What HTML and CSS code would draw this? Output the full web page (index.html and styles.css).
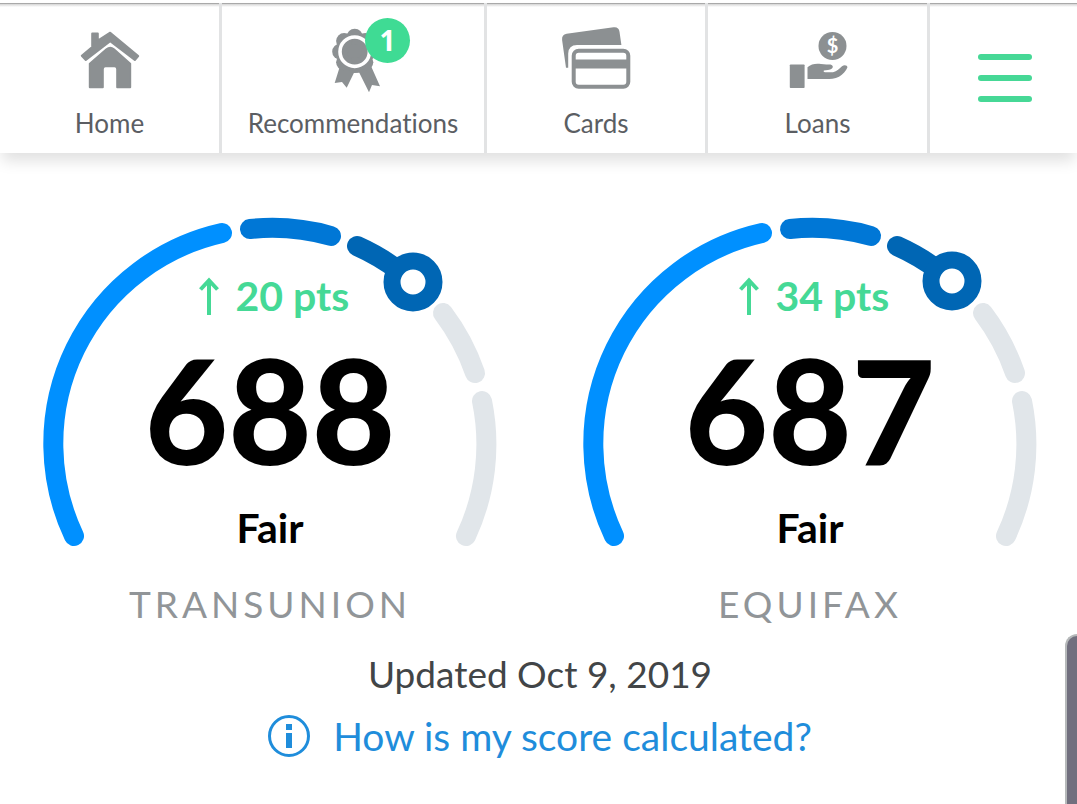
FILE: index.html
```html
<!DOCTYPE html>
<html lang="en">
<head>
  <meta charset="UTF-8">
  <meta name="viewport" content="width=device-width, initial-scale=1">
  <title>Credit Scores</title>
  <link rel="stylesheet" href="styles.css">
</head>
<body>
  <nav class="nav">
    <a class="nav-item" href="#home">
      <svg class="nav-icon" viewBox="0 0 70 68" aria-hidden="true">
        <g stroke="currentColor" stroke-width="2" stroke-linejoin="round">
          <path d="M17.2 7.5H22.8V14.5L35.2 6.7L63.2 30L59.8 34L35.2 15.2L10.8 34L6.8 29.7L17.2 20.9Z"/>
          <path d="M14.8 37.8L31.5 23.2Q35.2 20.2 38.9 23.2L55.2 37.8V61.3H42.2V43Q42.2 40.3 39.5 40.3H30.5Q27.8 40.3 27.8 43V61.3H14.8Z"/>
        </g>
      </svg>
      <span>Home</span>
    </a>
    <a class="nav-item" href="#recommendations">
      <span class="icon-wrap">
        <svg class="nav-icon" viewBox="0 0 70 68" aria-hidden="true">
          <path d="M22 40L16.7 57L24 56L28.7 61.7L36 46.7H41.3L51 66.3L54 59L62 60.3L53 40Z"/>
          <circle cx="36.7" cy="25.7" r="18"/>
          <circle cx="36.7" cy="10.7" r="8"/>
          <circle cx="47.3" cy="15.1" r="8"/>
          <circle cx="51.2" cy="25.7" r="8"/>
          <circle cx="47.3" cy="36.3" r="8"/>
          <circle cx="36.7" cy="39" r="8"/>
          <circle cx="26.1" cy="36.3" r="8"/>
          <circle cx="22.2" cy="25.7" r="8"/>
          <circle cx="26.1" cy="15.1" r="8"/>
          <circle cx="36.7" cy="25.7" r="14.7" fill="none" stroke="#fff" stroke-width="3.6"/>
        </svg>
        <span class="badge">1</span>
      </span>
      <span>Recommendations</span>
    </a>
    <a class="nav-item" href="#cards">
      <svg class="nav-icon" viewBox="0 0 70 68" aria-hidden="true">
        <path d="M5 41.7L1.1 14Q.6 8.6 5.6 7.8L52.5 1.3Q57.8 .6 58.5 5.8L60.4 19H16Q7.5 19 7.2 27.5V41.7Z"/>
        <rect x="12.7" y="24.7" width="54.6" height="36" rx="5" fill="none" stroke="currentColor" stroke-width="4"/>
        <path d="M12 33.4H68V42.6H12Z"/>
      </svg>
      <span>Cards</span>
    </a>
    <a class="nav-item" href="#loans">
      <svg class="nav-icon" viewBox="0 0 70 68" aria-hidden="true">
        <rect x="6.8" y="38.5" width="14.8" height="23.6" rx=".8"/>
        <path d="M24.5 41.3C28 37.8 33 37.2 38 37.9C42 38.5 45 38.2 47.5 38.5C50 39 50.5 41.2 49 42.4C47 44 43 43.8 40.8 44.5Q40 46 42 46.2H50C54 45 56.5 42.5 59 40.2C61.5 38.5 64.5 39.3 64.4 41.6C63 45 60 48.6 56 50.8C52 53 47 53 43 53H24.5Z"/>
        <circle cx="49.5" cy="20" r="14"/>
        <text class="coin-sign" x="49.5" y="27" text-anchor="middle">$</text>
      </svg>
      <span>Loans</span>
    </a>
    <button class="menu-btn" type="button" aria-label="Menu">
      <span class="menu-line"></span>
      <span class="menu-line"></span>
      <span class="menu-line"></span>
    </button>
  </nav>

  <main class="content">
    <div class="scores">
      <section class="score">
        <div class="gauge">
          <svg class="dial" viewBox="0 0 452 330" aria-hidden="true">
            <path class="seg-1" d="M30 318A216 216 0 0 1 178 15"/>
            <path class="seg-2" d="M206 11A216 216 0 0 1 287 18"/>
            <path class="seg-3" d="M313 28A216 216 0 0 1 354 52"/>
            <path class="seg-off" d="M399 95A216 216 0 0 1 431 155"/>
            <path class="seg-off" d="M438 183A216 216 0 0 1 422 318"/>
            <circle class="knob" cx="369" cy="64" r="21"/>
          </svg>
          <div class="reading">
            <p class="change">
              <svg class="arrow" viewBox="0 0 20 38" aria-hidden="true"><path d="M10 38V4M1.5 12.5L10 3.5L18.5 12.5"/></svg>
              20 pts
            </p>
            <p class="number">688</p>
            <p class="rating">Fair</p>
          </div>
        </div>
        <h2 class="bureau">TRANSUNION</h2>
      </section>

      <section class="score">
        <div class="gauge">
          <svg class="dial" viewBox="0 0 452 330" aria-hidden="true">
            <path class="seg-1" d="M30 318A216 216 0 0 1 178 15"/>
            <path class="seg-2" d="M206 11A216 216 0 0 1 287 18"/>
            <path class="seg-3" d="M313 28A216 216 0 0 1 354 52"/>
            <path class="seg-off" d="M399 95A216 216 0 0 1 431 155"/>
            <path class="seg-off" d="M438 183A216 216 0 0 1 422 318"/>
            <circle class="knob" cx="368" cy="63" r="21"/>
          </svg>
          <div class="reading">
            <p class="change">
              <svg class="arrow" viewBox="0 0 20 38" aria-hidden="true"><path d="M10 38V4M1.5 12.5L10 3.5L18.5 12.5"/></svg>
              34 pts
            </p>
            <p class="number">687</p>
            <p class="rating">Fair</p>
          </div>
        </div>
        <h2 class="bureau">EQUIFAX</h2>
      </section>
    </div>

    <p class="updated">Updated Oct 9, 2019</p>
    <a class="help" href="#how">
      <svg class="info" viewBox="0 0 42 42" aria-hidden="true">
        <circle cx="21" cy="21" r="19.5" fill="none" stroke="currentColor" stroke-width="3"/>
        <path d="M18 9H24V15H18ZM18 18H24V33H18Z"/>
      </svg>
      How is my score calculated?
    </a>
  </main>

  <div class="side-handle"></div>
</body>
</html>
```
FILE: styles.css
```css
* {
  box-sizing: border-box;
}
body {
  margin: 0;
  padding-top: 3px;
  background: #fff;
  color: #000;
  font-family: Lato, "Liberation Sans", sans-serif;
  font-variant-ligatures: none;
}
p, h2 {
  margin: 0;
}
a {
  text-decoration: none;
}

/* top navigation */
.nav {
  display: grid;
  grid-template-columns: 222fr 265fr 221fr 222fr 147fr;
  height: 150px;
  background: linear-gradient(#a9a9a9 1px, #d4d4d4 1px, #fff 4px);
  box-shadow: 0 10px 14px -2px rgba(0,0,0,0.12);
}
.nav-item {
  display: flex;
  flex-direction: column;
  align-items: center;
  gap: 13px;
  padding-top: 23px;
  border-right: 3px solid #e2e3e4;
  color: #5b5e63;
  font-size: 26px;
  line-height: 32px;
}
.nav-icon {
  display: block;
  width: 70px;
  height: 68px;
  color: #8c9092;
  fill: currentColor;
}
.icon-wrap {
  position: relative;
}
.badge {
  position: absolute;
  top: -8px;
  left: 47px;
  width: 45px;
  height: 45px;
  border-radius: 50%;
  background: #3fdb94;
  color: #fff;
  font-family: "Open Sans", sans-serif;
  font-size: 28px;
  font-weight: 700;
  line-height: 44px;
  text-align: center;
}
.coin-sign {
  fill: #fff;
  font-size: 20px;
  font-weight: 700;
}
.menu-btn {
  display: flex;
  flex-direction: column;
  align-items: center;
  justify-content: center;
  gap: 15px;
  padding: 0 0 0 2px;
  border: none;
  background: none;
  cursor: pointer;
}
.menu-line {
  width: 54px;
  height: 6px;
  border-radius: 3px;
  background: #46d896;
}

/* score dials */
.content {
  padding: 65px 0 0 3px;
}
.scores {
  display: grid;
  grid-template-columns: 1fr 1fr;
  column-gap: 6px;
}
.score {
  display: flex;
  flex-direction: column;
  align-items: center;
}
.gauge {
  display: grid;
  justify-items: center;
}
.dial, .reading {
  grid-area: 1 / 1;
}
.dial {
  width: 452px;
  height: 330px;
  fill: none;
  stroke-width: 20px;
  stroke-linecap: round;
  overflow: visible;
}
.seg-1 { stroke: #0090ff; }
.seg-2 { stroke: #0077d6; }
.seg-3 { stroke: #0066b4; }
.seg-off { stroke: #e1e6ea; }
.knob {
  fill: #fff;
  stroke: #0066b4;
  stroke-width: 17px;
}
.reading {
  padding-top: 54px;
  text-align: center;
}
.change {
  display: flex;
  align-items: center;
  justify-content: center;
  gap: 17px;
  padding-left: 8px;
  color: #45d996;
  font-size: 41px;
  font-weight: 700;
  line-height: 48px;
}
.arrow {
  width: 20px;
  height: 38px;
  fill: none;
  stroke: currentColor;
  stroke-width: 4px;
}
.number {
  margin-top: 17px;
  font-size: 144px;
  font-weight: 900;
  line-height: 146px;
}
.rating {
  margin-top: 21px;
  font-size: 41px;
  font-weight: 700;
  line-height: 48px;
}
.bureau {
  margin-top: 30px;
  color: #919598;
  font-size: 37px;
  font-weight: 400;
  letter-spacing: 4px;
  line-height: 44px;
}

.updated {
  margin-top: 26px;
  color: #424547;
  font-size: 37px;
  line-height: 44px;
  text-align: center;
}
.help {
  display: flex;
  align-items: center;
  justify-content: center;
  gap: 23px;
  margin-top: 18px;
  color: #1f8ddb;
  font-size: 39px;
  line-height: 44px;
}
.info {
  width: 42px;
  height: 42px;
  fill: currentColor;
}

/* edge panel handle over the page */
.side-handle {
  position: fixed;
  right: 0;
  bottom: 0;
  width: 12px;
  height: 170px;
  border: 2px solid #b6b9ba;
  border-width: 2px 0 0 2px;
  border-radius: 12px 0 0 0;
  background: #716f7e;
}
```
